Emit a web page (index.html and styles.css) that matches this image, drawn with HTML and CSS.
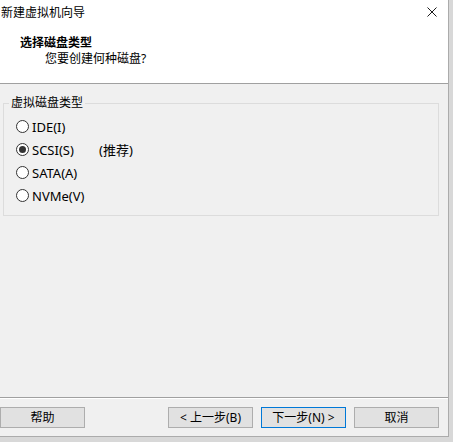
FILE: index.html
```html
<!DOCTYPE html>
<html lang="zh-CN">
<head>
<meta charset="utf-8">
<title>新建虚拟机向导</title>
<link rel="stylesheet" href="styles.css">
</head>
<body>
<div class="window">
  <div class="top">
    <div class="titlebar">
      <span class="title">新建虚拟机向导</span>
      <svg class="close" width="10" height="10" viewBox="0 0 10 10"><path d="M0.5 0.5L9.5 9.5M9.5 0.5L0.5 9.5" stroke="#1a1a1a" stroke-width="1"/></svg>
    </div>
    <div class="header">
      <div class="h-title">选择磁盘类型</div>
      <div class="h-sub">您要创建何种磁盘?</div>
    </div>
  </div>
  <div class="main">
    <fieldset class="group">
      <legend>虚拟磁盘类型</legend>
      <div class="row"><span class="radio"></span><span class="rtext">IDE(I)</span></div>
      <div class="row"><span class="radio checked"></span><span class="rtext">SCSI(S)</span><span class="note">(推荐)</span></div>
      <div class="row"><span class="radio"></span><span class="rtext">SATA(A)</span></div>
      <div class="row"><span class="radio"></span><span class="rtext">NVMe(V)</span></div>
    </fieldset>
  </div>
  <div class="footer">
    <button class="btn">帮助</button>
    <div class="spacer"></div>
    <button class="btn">&lt; 上一步(B)</button>
    <button class="btn default">下一步(N) &gt;</button>
    <button class="btn">取消</button>
  </div>
</div>
</body>
</html>
```
FILE: styles.css
```css
html, body {
  margin: 0;
  padding: 0;
}
body {
  background: #d8d8d8;
  width: 453px;
  height: 442px;
  overflow: hidden;
  font-family: "Noto Sans", "Noto Sans CJK SC", sans-serif;
  font-size: 12px;
  color: #000;
}
.window {
  width: 449px;
  height: 437px;
  box-sizing: border-box;
  border-right: 1px solid #ababab;
  border-bottom: 1px solid #ababab;
  background: #f0f0f0;
  display: flex;
  flex-direction: column;
}
.top {
  background: #fff;
  height: 84px;
  box-sizing: border-box;
  border-bottom: 1px solid #a0a0a0;
}
.titlebar {
  height: 26px;
  display: flex;
  align-items: center;
  justify-content: space-between;
  padding-left: 1px;
  padding-right: 11px;
}
.title {
  line-height: 26px;
}
.close {
  display: block;
  margin-top: -3px;
}
.header {
  padding-top: 8px;
}
.h-title {
  font-weight: bold;
  line-height: 16px;
  padding-left: 20px;
  font-family: "Noto Sans CJK SC", sans-serif;
}
.h-sub {
  line-height: 16px;
  padding-left: 45px;
  margin-top: 1px;
}
.main {
  flex: 1;
  padding-top: 12px;
  padding-left: 3px;
}
.group {
  margin: 0;
  width: 436px;
  box-sizing: border-box;
  border: 1px solid #dcdcdc;
  padding: 5px 0 8px 5px;
  min-width: 0;
}
.group legend {
  padding: 0 2px;
  line-height: 14px;
}
.row {
  height: 23px;
  display: flex;
  align-items: center;
  padding-left: 7px;
}
.radio {
  width: 13px;
  height: 13px;
  box-sizing: border-box;
  border: 1px solid #333;
  border-radius: 50%;
  background: #fff;
  margin-right: 3px;
  display: flex;
  align-items: center;
  justify-content: center;
}
.radio.checked::after {
  content: "";
  width: 7px;
  height: 7px;
  border-radius: 50%;
  background: #333;
}
.rtext {
  width: 67px;
  font-size: 13px;
}
.note {
  font-size: 13px;
}
.footer {
  height: 39px;
  box-sizing: border-box;
  border-top: 1px solid #a0a0a0;
  box-shadow: inset 0 1px 0 #fff;
  padding: 9px 9px 0 0;
  display: flex;
  align-items: flex-start;
  gap: 8px;
}
.spacer {
  flex: 1;
}
.btn {
  width: 85px;
  height: 21px;
  box-sizing: border-box;
  border: 1px solid #adadad;
  background: #e1e1e1;
  font-family: "Noto Sans", "Noto Sans CJK SC", sans-serif;
  font-size: 12px;
  color: #000;
  padding: 0;
  margin: 0;
  line-height: 19px;
}
.btn.default {
  border: 1px solid #0078d7;
}
```
